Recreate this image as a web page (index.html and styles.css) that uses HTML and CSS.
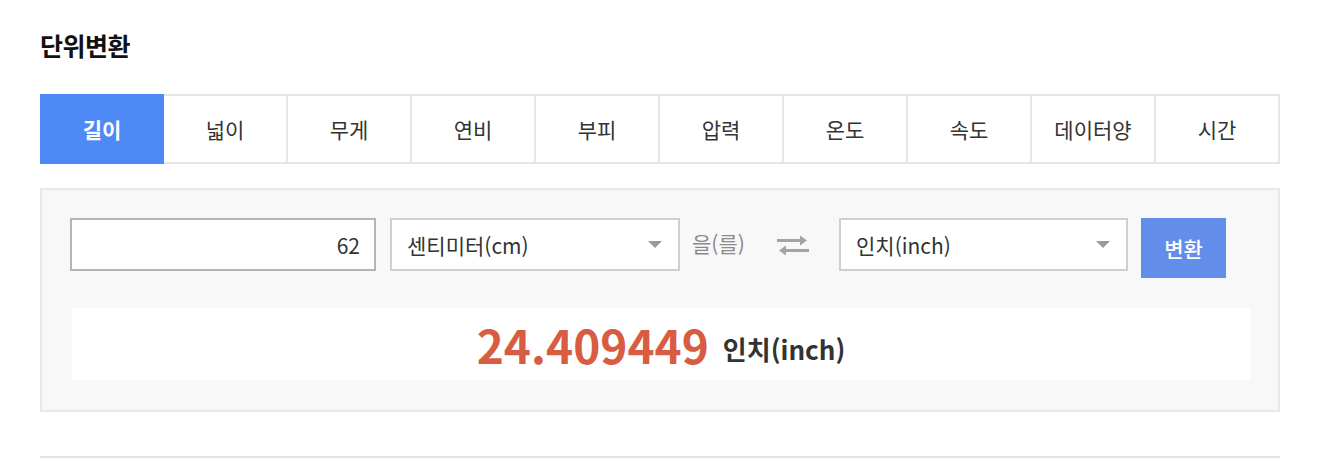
FILE: index.html
```html
<!DOCTYPE html>
<html lang="ko">
<head>
<meta charset="utf-8">
<link rel="stylesheet" href="styles.css">
</head>
<body>
<div class="wrap">
  <h2 class="title">단위변환</h2>
  <ul class="tabs">
    <li class="tab active">길이</li>
    <li class="tab">넓이</li>
    <li class="tab">무게</li>
    <li class="tab">연비</li>
    <li class="tab">부피</li>
    <li class="tab">압력</li>
    <li class="tab">온도</li>
    <li class="tab">속도</li>
    <li class="tab">데이터양</li>
    <li class="tab">시간</li>
  </ul>
  <div class="panel">
    <div class="row">
      <div class="field num">62</div>
      <div class="field sel sel1"><span>센티미터(cm)</span><i class="caret"></i></div>
      <span class="josa">을(를)</span>
      <svg class="swap" width="34" height="26" viewBox="0 0 34 26">
        <path d="M1 8.5H27" stroke="#a3a3a3" stroke-width="3"/>
        <path d="M24 3.5L31 8.5L24 13.5Z" fill="#a3a3a3"/>
        <path d="M33 18.5H7" stroke="#a3a3a3" stroke-width="3"/>
        <path d="M10 13.5L3 18.5L10 23.5Z" fill="#a3a3a3"/>
      </svg>
      <div class="field sel sel2"><span>인치(inch)</span><i class="caret"></i></div>
      <button class="btn">변환</button>
    </div>
    <div class="result">
      <strong class="value">24.409449</strong>
      <span class="unit">인치(inch)</span>
    </div>
  </div>
  <div class="rule"></div>
</div>
</body>
</html>
```
FILE: styles.css
```css
* { box-sizing: border-box; }
html, body { margin: 0; padding: 0; background: #fff; }
body {
  font-family: "Noto Sans CJK KR", "Noto Sans", sans-serif;
  color: #333;
}
.wrap { padding: 27px 40px 0 40px; width: 1320px; }
.title {
  margin: 0;
  font-size: 25px;
  font-weight: 700;
  color: #111;
  line-height: 36px;
  letter-spacing: -0.5px;
}
.tabs {
  list-style: none;
  margin: 31px 0 0 0;
  padding: 0;
  display: grid;
  grid-template-columns: repeat(10, 124px);
  height: 70px;
}
.tab {
  display: flex;
  align-items: center;
  justify-content: center;
  border-top: 2px solid #e6e6e6;
  border-bottom: 2px solid #e6e6e6;
  border-right: 2px solid #e6e6e6;
  font-size: 21px;
  color: #333;
}
.tab:first-child { border-left: 2px solid #e6e6e6; }
.tab.active {
  background: #4e8af5;
  border-color: #4e8af5;
  color: #fff;
  font-weight: 700;
}
.panel {
  margin-top: 24px;
  background: #f8f8f8;
  border: 2px solid #e8e8e8;
  padding: 28px 28px 29px 28px;
  height: 224px;
}
.row {
  display: flex;
  align-items: flex-start;
}
.field {
  height: 53px;
  background: #fff;
  border: 2px solid #cfcfcf;
  font-size: 21px;
  display: flex;
  align-items: center;
  color: #333;
}
.num {
  width: 306px;
  border-color: #b4b4b4;
  justify-content: flex-end;
  padding-right: 14px;
}
.sel {
  justify-content: space-between;
  padding: 0 16px 0 15px;
}
.sel1 { width: 290px; margin-left: 14px; }
.sel2 { width: 289px; }
.caret {
  width: 0; height: 0;
  border-left: 7px solid transparent;
  border-right: 7px solid transparent;
  border-top: 7px solid #9a9a9a;
}
.josa {
  margin-left: 12px;
  width: 56px;
  height: 53px;
  line-height: 50px;
  font-size: 21px;
  color: #8a8a8a;
  white-space: nowrap;
}
.swap { margin: 14px 29px 0 28px; }
.btn {
  margin-left: 13px;
  width: 85px;
  height: 60px;
  border: 0;
  background: #628de8;
  color: #fff;
  font-family: inherit;
  font-size: 21px;
  font-weight: 500;
  padding: 0;
}
.result {
  margin: 30px 0 0 2px;
  height: 72px;
  background: #fff;
  display: flex;
  align-items: center;
  justify-content: center;
  gap: 14px;
}
.value {
  font-size: 46px;
  font-weight: 700;
  color: #d85c41;
  line-height: 1;
}
.unit {
  font-size: 26px;
  font-weight: 700;
  color: #333;
  padding-top: 8px;
}
.rule {
  margin-top: 44px;
  height: 2px;
  background: #e3e3e3;
}
```
